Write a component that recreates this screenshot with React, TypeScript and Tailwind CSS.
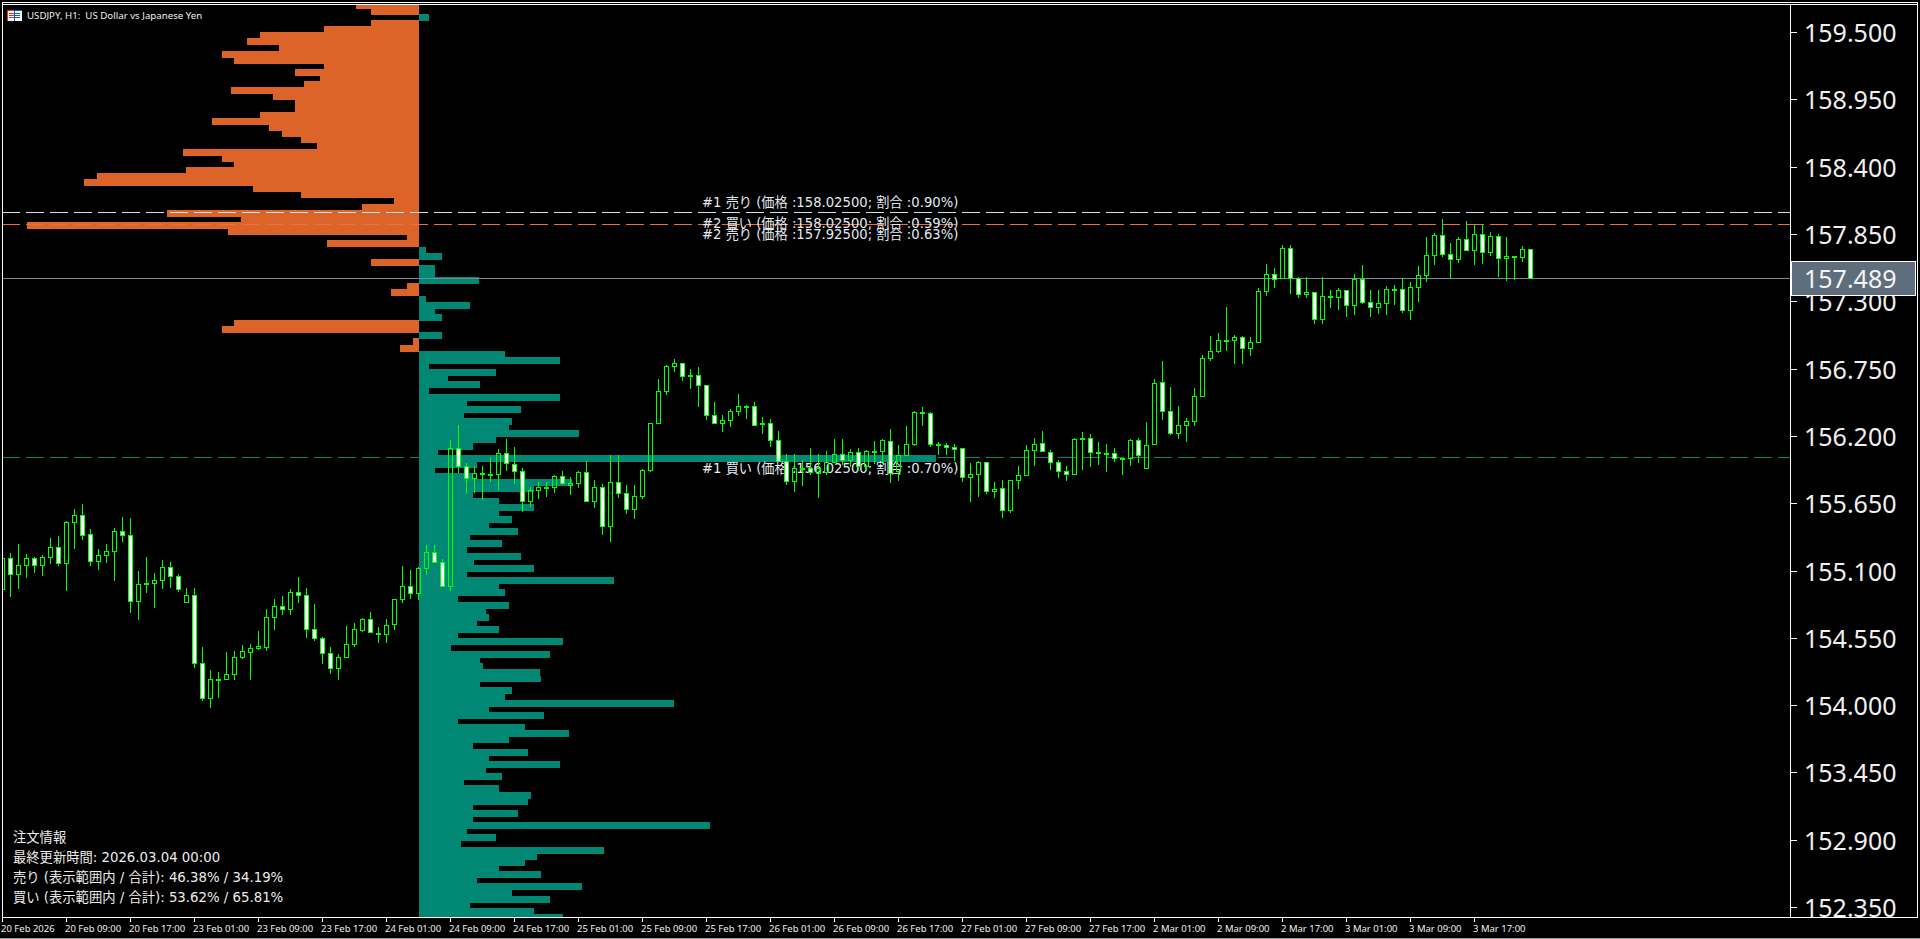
import React from 'react';

// [top, bottom, wickTop, wickBottom, white?] in page pixels, one bar every 8px from x=2
const candles: number[][] = [
  [558,589,558,589,0],[558,574,553,596,1],[565,574,544,588,0],[558,565,554,577,0],[558,565,557,572,1],[557,565,555,575,0],
  [547,557,538,563,0],[547,563,536,565,1],[522,563,521,590,0],[515,522,509,548,0],[515,535,504,539,1],[534,561,529,565,1],
  [555,561,549,569,0],[551,555,544,562,0],[531,551,528,580,0],[531,535,517,541,1],[535,601,518,612,1],[584,601,571,619,0],
  [583,584,557,592,0],[580,583,573,607,0],[567,580,560,588,0],[567,576,562,587,1],[576,589,574,591,1],[595,602,588,602,0],
  [595,663,588,667,1],[663,698,647,700,1],[679,698,670,707,0],[679,680,672,697,0],[674,679,652,679,0],[657,674,651,679,0],
  [651,657,645,658,0],[648,652,644,679,0],[646,648,631,649,0],[617,647,609,650,0],[606,617,599,629,0],[606,609,596,614,1],
  [592,609,589,614,0],[592,595,577,602,1],[595,629,588,637,1],[629,638,604,640,1],[638,653,637,663,1],[653,668,647,673,1],
  [657,668,654,679,0],[644,657,626,657,0],[629,644,623,646,0],[619,630,618,631,0],[619,632,612,632,1],[633,634,627,642,0],
  [625,634,619,642,0],[599,624,599,629,0],[586,599,566,602,0],[586,593,570,598,1],[568,593,567,599,0],[552,568,545,574,0],
  [552,562,545,562,1],[562,586,559,586,1],[448,586,440,590,0],[448,466,425,472,1],[466,478,463,493,1],[473,478,466,492,0],
  [473,474,466,499,0],[474,475,457,481,0],[453,474,449,489,0],[453,463,439,470,1],[464,471,447,483,1],[471,501,468,511,1],
  [490,501,487,506,0],[487,490,482,498,0],[487,488,482,496,0],[476,487,475,492,0],[476,483,471,484,1],[483,485,477,494,0],
  [472,483,471,487,0],[472,501,461,501,1],[487,501,480,507,0],[487,526,484,534,1],[482,526,455,541,0],[482,493,455,497,1],
  [493,509,485,513,1],[496,509,485,518,0],[470,496,469,498,0],[423,470,423,471,0],[391,423,379,423,0],[366,391,365,394,0],
  [363,366,359,371,0],[363,376,363,380,1],[375,376,369,388,0],[375,385,367,406,1],[385,415,385,419,1],[415,423,402,423,1],
  [420,423,415,431,0],[411,420,409,426,0],[406,411,394,415,0],[406,407,405,418,0],[406,425,402,425,1],[423,424,417,433,0],
  [423,440,419,446,1],[440,461,431,461,1],[461,481,454,484,1],[468,481,454,491,0],[468,469,460,485,0],[468,472,448,474,1],
  [468,473,454,497,0],[462,472,451,474,0],[454,462,439,462,0],[454,460,439,464,1],[452,460,449,466,0],[452,466,448,470,1],
  [451,466,450,470,0],[451,452,441,463,0],[440,451,439,463,0],[441,473,429,482,1],[455,471,445,480,0],[444,455,426,455,0],
  [412,444,411,445,0],[412,413,407,425,0],[413,444,412,446,1],[444,445,442,454,0],[445,447,443,454,1],[447,449,444,460,1],
  [448,477,448,481,1],[474,477,463,501,0],[462,474,461,496,0],[462,491,462,493,1],[489,491,482,497,0],[488,510,480,517,1],
  [480,510,480,512,0],[475,480,466,488,0],[450,475,445,475,0],[444,450,438,465,0],[443,451,431,451,1],[452,462,450,469,1],
  [462,471,460,477,1],[471,474,466,480,1],[439,474,438,474,0],[438,439,432,469,0],[438,452,434,466,1],[452,453,442,464,0],
  [453,454,444,471,0],[453,458,448,461,1],[458,459,458,474,0],[440,458,439,465,0],[440,455,438,462,1],[445,468,422,468,0],
  [383,444,379,444,0],[382,411,361,419,1],[411,433,387,434,1],[425,433,406,438,0],[421,425,418,441,0],[396,421,388,425,0],
  [358,396,355,396,0],[351,358,336,360,0],[340,351,333,352,0],[340,341,307,350,0],[337,340,335,363,0],[337,348,336,363,1],
  [342,348,337,355,0],[291,342,288,342,0],[274,291,264,295,0],[274,279,268,287,1],[248,278,245,278,0],[248,278,245,293,1],
  [278,294,277,297,1],[292,294,277,297,0],[292,319,292,323,1],[296,319,277,323,0],[296,297,290,307,0],[290,297,288,309,0],
  [290,305,290,316,1],[279,305,274,314,0],[279,302,265,303,1],[302,307,290,316,1],[303,307,290,313,0],[289,303,286,314,0],
  [289,290,285,304,0],[289,310,278,312,1],[287,310,282,319,0],[275,287,266,301,0],[255,275,237,281,0],[235,255,233,264,0],
  [235,254,219,256,1],[254,259,243,277,1],[239,259,237,262,0],[239,250,221,250,1],[234,250,225,264,0],[234,252,224,263,1],
  [236,252,232,255,0],[236,258,234,276,1],[256,258,237,280,0],[256,257,256,279,0],[249,257,246,261,0],[249,278,249,278,1],
];

// [top, bottom, left edge] — bars grow left from x=419
const sellBars: number[][] = [
  [5,9,356],[9,15,371],[20,26,371],[26,32,324],[32,38,260],[38,45,247],[45,51,279],[51,58,222],[58,64,234],[64,69,324],
  [69,76,295],[76,81,320],[81,87,304],[87,94,231],[94,100,273],[100,112,295],[112,118,260],[118,125,212],[125,131,269],
  [131,137,282],[137,143,301],[143,149,317],[149,156,183],[156,162,222],[162,167,234],[167,173,186],[173,179,97],[179,186,84],
  [186,192,253],[192,198,301],[198,204,394],[204,210,362],[210,217,167],[217,222,241],[222,229,27],[229,235,228],[235,240,407],
  [240,247,327],[259,266,371],[283,289,407],[289,296,391],[320,326,234],[326,333,222],[338,345,413],[345,352,400],
];

// [top, bottom, right edge] — bars grow right from x=419
const buyBars: number[][] = [
  [14,21,429],[247,253,426],[253,260,442],[265,277,435],[277,284,479],[296,302,426],[302,309,470],[309,314,435],[314,321,442],
  [332,339,442],[351,357,505],[357,364,560],[364,369,429],[369,376,496],[376,381,448],[381,388,480],[388,394,429],[394,401,560],
  [401,406,467],[406,413,521],[413,418,464],[418,425,512],[425,430,509],[430,437,579],[437,443,496],[443,450,473],[450,455,438],
  [455,462,936],[462,468,477],[468,473,435],[473,479,473],[479,486,572],[486,492,534],[492,498,473],[498,504,499],[504,511,534],
  [511,516,499],[516,523,512],[523,528,489],[528,535,518],[535,540,470],[540,547,502],[547,553,467],[553,560,521],[560,565,474],
  [565,572,534],[572,577,467],[577,584,614],[584,589,499],[589,596,505],[596,602,458],[602,609,509],[609,614,486],[614,621,489],
  [621,626,477],[626,633,499],[633,638,458],[638,645,563],[645,651,451],[651,658,550],[658,663,480],[663,669,483],[669,676,540],
  [676,682,541],[682,687,480],[687,694,512],[694,700,505],[700,707,674],[707,712,489],[712,719,544],[719,724,458],[724,730,525],
  [730,737,569],[737,743,509],[743,749,473],[749,756,528],[756,761,489],[761,768,560],[768,773,486],[773,780,502],[780,785,464],
  [785,792,499],[792,799,531],[799,805,528],[805,810,473],[810,817,518],[817,822,473],[822,829,710],[829,834,467],[834,841,496],
  [841,847,461],[847,854,604],[854,860,537],[860,866,525],[866,871,499],[871,878,541],[878,883,477],[883,890,582],[890,896,512],
  [896,903,550],[903,908,470],[908,914,534],[914,917,563],
];

const prices = ['159.500','158.950','158.400','157.850','157.300','156.750','156.200','155.650','155.100','154.550','154.000','153.450','152.900','152.350'];

const times = [
  '20 Feb 2026','20 Feb 09:00','20 Feb 17:00','23 Feb 01:00','23 Feb 09:00','23 Feb 17:00','24 Feb 01:00','24 Feb 09:00',
  '24 Feb 17:00','25 Feb 01:00','25 Feb 09:00','25 Feb 17:00','26 Feb 01:00','26 Feb 09:00','26 Feb 17:00','27 Feb 01:00',
  '27 Feb 09:00','27 Feb 17:00','2 Mar 01:00','2 Mar 09:00','2 Mar 17:00','3 Mar 01:00','3 Mar 09:00','3 Mar 17:00',
];

const orderLabels = [
  { text: '#1 売り (価格 :158.02500; 割合 :0.90%)', top: 'top-[189px]' },
  { text: '#2 買い (価格 :158.02500; 割合 :0.59%)', top: 'top-[210px]' },
  { text: '#2 売り (価格 :157.92500; 割合 :0.63%)', top: 'top-[221px]' },
  { text: '#1 買い (価格 :156.02500; 割合 :0.70%)', top: 'top-[455px]' },
];

const wide = "font-['DejaVu_Sans','Noto_Sans_CJK_JP',sans-serif]";

function VolumeProfile() {
  return (
    <svg className="absolute inset-0" width={1787} height={912} viewBox="3 5 1787 912" shapeRendering="crispEdges">
      {sellBars.map(([t, b, l], i) => (
        <rect key={i} x={l} y={t} width={419 - l} height={b - t} fill="#dc6428" />
      ))}
      {buyBars.map(([t, b, r], i) => (
        <rect key={i} x={419} y={t} width={r - 419} height={b - t} fill="#008874" />
      ))}
      <line x1={2} x2={1790} y1={212.5} y2={212.5} stroke="#d4e0ee" strokeDasharray="18 6" />
      <line x1={2} x2={1790} y1={224.5} y2={224.5} stroke="#e8703a" strokeDasharray="18 6" />
      <line x1={2} x2={1790} y1={457.5} y2={457.5} stroke="#008874" strokeDasharray="18 6" />
      <line x1={2} x2={1790} y1={278.5} y2={278.5} stroke="#778899" />
    </svg>
  );
}

function Candles() {
  return (
    <svg className="absolute inset-0" width={1787} height={912} viewBox="3 5 1787 912" shapeRendering="crispEdges">
      {candles.map(([top, bot, wt, wb, white], i) => {
        const x = 2 + 8 * i;
        const h = bot - top;
        return (
          <g key={i}>
            {wt < top && <rect x={x} y={wt} width={1} height={top - wt} fill="#00ff00" />}
            {wb > bot && <rect x={x} y={bot} width={1} height={wb - bot + 1} fill="#00ff00" />}
            {h <= 1 ? (
              <rect x={x - 2} y={top} width={5} height={2} fill="#00ff00" />
            ) : (
              <rect x={x - 1.5} y={top + 0.5} width={4} height={h} fill={white ? '#ffffff' : 'none'} stroke="#00ff00" />
            )}
          </g>
        );
      })}
    </svg>
  );
}

function SymbolFlag() {
  return (
    <svg width="15" height="11" viewBox="0 0 15 11" shapeRendering="crispEdges">
      <rect width="15" height="11" fill="#ffffff" />
      <rect x="0" y="0" width="7" height="11" fill="none" stroke="#e0352b" />
      <rect x="7" y="0" width="8" height="11" fill="none" stroke="#0b5fa8" />
      <rect x="2" y="3" width="5" height="1" fill="#e0352b" />
      <rect x="2" y="5" width="5" height="1" fill="#e0352b" />
      <rect x="2" y="7" width="5" height="1" fill="#e0352b" />
      <rect x="8" y="3" width="5" height="1" fill="#0b5fa8" />
      <rect x="8" y="5" width="5" height="1" fill="#0b5fa8" />
      <rect x="8" y="7" width="5" height="1" fill="#0b5fa8" />
    </svg>
  );
}

function PriceAxis() {
  return (
    <div className="relative w-[126px] overflow-hidden font-['Noto_Sans',sans-serif]">
      <div className="-mt-[6px] flex flex-col">
        {prices.map((p) => (
          <div key={p} className="flex h-[67.3px] shrink-0 items-center">
            <div className="h-px w-[6px] bg-white" />
            <span className="ml-[7px] text-[25px] leading-none text-[#f0f0f0]">{p}</span>
          </div>
        ))}
      </div>
      <div className="absolute left-0 top-[256px] flex h-[35px] w-[125px] items-center border border-white bg-[#5f6e7c] pl-[12px] text-[25px] leading-none text-[#f4f4f4]">
        157.489
      </div>
    </div>
  );
}

export default function App() {
  return (
    <div className="flex h-[939px] w-[1920px] flex-col overflow-hidden bg-black">
      {/* Chart window */}
      <div className="ml-[2px] mr-[2px] mt-[2px] flex h-[916px] flex-col border-x border-b border-t border-white">
        <div className="h-px shrink-0" />
        <div className="flex min-h-0 flex-1 border-t border-white">
          <div className="relative w-[1787px] overflow-hidden">
            <VolumeProfile />
            {orderLabels.map((l) => (
              <div key={l.text} className={`absolute left-[699px] ${l.top} ${wide} whitespace-nowrap text-[13.2px] leading-[18px] text-[#e4eaf2]`}>
                {l.text}
              </div>
            ))}
            <Candles />
            {/* Symbol title */}
            <div className="absolute left-[4px] top-[5px] flex items-center gap-[5px] whitespace-pre font-['Noto_Sans',sans-serif] text-[9.7px] leading-[11px] text-[#f0f0f0]">
              <SymbolFlag />
              <span>USDJPY, H1:  US Dollar vs Japanese Yen</span>
            </div>
            {/* Order info */}
            <div className={`absolute left-[10px] top-[823px] flex flex-col ${wide} text-[13.3px] leading-[20px] text-[#ececec]`}>
              <div>注文情報</div>
              <div>最終更新時間: 2026.03.04 00:00</div>
              <div>売り (表示範囲内 / 合計): 46.38% / 34.19%</div>
              <div>買い (表示範囲内 / 合計): 53.62% / 65.81%</div>
            </div>
          </div>
          <div className="w-px shrink-0 bg-white" />
          <PriceAxis />
        </div>
      </div>
      {/* Time axis */}
      <div className="ml-[2px] flex h-[20px] shrink-0 font-['Noto_Sans',sans-serif]">
        {times.map((t) => (
          <div key={t} className="flex w-[64px] shrink-0 flex-col">
            <div className="h-[4px] w-px bg-white" />
            <span className="-ml-px whitespace-nowrap text-[9.5px] leading-[13px] text-[#f0f0f0]">{t}</span>
          </div>
        ))}
      </div>
      <div className="mt-auto h-px shrink-0 bg-[#a0a0a0]" />
    </div>
  );
}
